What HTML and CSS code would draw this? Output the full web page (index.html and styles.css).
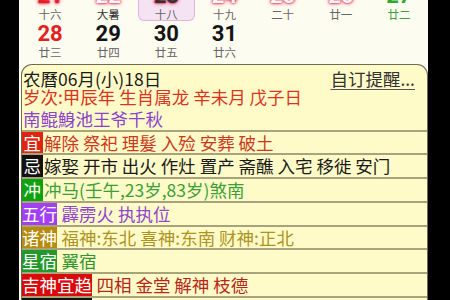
FILE: index.html
```html
<!DOCTYPE html>
<html lang="zh">
<head>
<meta charset="utf-8">
<link rel="stylesheet" href="styles.css">
</head>
<body>
<div class="app">
  <div class="cal">
    <div class="week">
      <div class="day"><div class="num red glow">21</div><div class="lunar">十六</div></div>
      <div class="day"><div class="num white glow">22</div><div class="lunar term">大暑</div></div>
      <div class="day today"><div class="num dark glow">23</div><div class="lunar">十八</div></div>
      <div class="day"><div class="num white glow">24</div><div class="lunar">十九</div></div>
      <div class="day"><div class="num white glow">25</div><div class="lunar">二十</div></div>
      <div class="day"><div class="num white glow">26</div><div class="lunar">廿一</div></div>
      <div class="day"><div class="num green">27</div><div class="lunar green">廿二</div></div>
    </div>
    <div class="week">
      <div class="day"><div class="num red">28</div><div class="lunar">廿三</div></div>
      <div class="day"><div class="num">29</div><div class="lunar">廿四</div></div>
      <div class="day"><div class="num">30</div><div class="lunar">廿五</div></div>
      <div class="day"><div class="num">31</div><div class="lunar">廿六</div></div>
      <div class="day"></div>
      <div class="day"></div>
      <div class="day"></div>
    </div>
  </div>
  <div class="box">
    <div class="head">
      <div class="line1"><span>农曆06月(小)18日</span><span class="remind">自订提醒...</span></div>
      <div class="line2">岁次:甲辰年 生肖属龙 辛未月 戊子日</div>
      <div class="line3">南鲲鯓池王爷千秋</div>
    </div>
    <div class="row yi"><span class="tag one">宜</span><span class="txt">解除 祭祀 理髮 入殓 安葬 破土</span></div>
    <div class="row ji"><span class="tag one">忌</span><span class="txt">嫁娶 开市 出火 作灶 置产 斋醮 入宅 移徙 安门</span></div>
    <div class="row chong"><span class="tag one">冲</span><span class="txt">冲马(壬午,23岁,83岁)煞南</span></div>
    <div class="row wuxing"><span class="tag">五行</span><span class="txt">霹雳火 执执位</span></div>
    <div class="row zhushen"><span class="tag">诸神</span><span class="txt">福神:东北 喜神:东南 财神:正北</span></div>
    <div class="row xingxiu"><span class="tag">星宿</span><span class="txt">翼宿</span></div>
    <div class="row jishen"><span class="tag">吉神宜趋</span><span class="txt">四相 金堂 解神 枝德</span></div>
    <div class="row xiongshen"><span class="tag">凶神宜忌</span><span class="txt">月煞 月虚 血支 天贼</span></div>
  </div>
</div>
</body>
</html>
```

FILE: styles.css
```css
html, body {
  margin: 0;
  height: 100%;
  overflow: hidden;
  background: #000;
}

.app {
  margin-left: 19px;
  width: 409px;
  height: 300px;
  overflow: hidden;
  background: #fdfcf1;
  font-family: "Noto Sans CJK SC", sans-serif;
}

.cal {
  margin-top: -17px;
  padding-left: 2px;
}

.week {
  display: grid;
  grid-template-columns: repeat(7, 1fr);
  height: 38px;
}

.day {
  padding-top: 1px;
  text-align: center;
  box-sizing: border-box;
}

.day.today {
  margin: 0 0.5px 0.5px;
  background: #f5e3f3;
  border: 1px solid #e3b2df;
  border-top: none;
  border-radius: 0 0 6px 6px;
  padding-top: 1px;
}

.num {
  font: bold 22px/24px Roboto, sans-serif;
  color: #151515;
}

.num.red { color: #e22222; }
.num.green { color: #2ea82e; }
.num.white { color: #fff6f8; }
.num.dark { color: #333; }
.num.glow {
  text-shadow: 0 0 2px #e0204a, 0 0 3px #e0204a, 0 0 5px #f07090;
}

.lunar {
  font-size: 11.5px;
  line-height: 12px;
  color: #666;
}

.lunar.term { color: #333; }
.lunar.green { color: #3aa03a; }

.box {
  margin: 5px 0 0 2px;
  border: 1.5px solid #6d6b52;
  border-bottom: none;
  border-radius: 11px 11px 0 0;
  background: #fffbc8;
  font-size: 17.5px;
}

.head {
  padding-left: 1px;
}

.line1 {
  display: flex;
  justify-content: space-between;
  padding-top: 4px;
  line-height: 20px;
  color: #1a1a1a;
}

.remind {
  margin-right: 12px;
  color: #333;
  text-decoration: underline;
  text-decoration-color: #555;
  text-underline-offset: 3px;
}

.line2 {
  line-height: 16px;
  color: #d7351f;
}

.line3 {
  padding-top: 3px;
  line-height: 21.5px;
  color: #8a42cf;
}

.row {
  display: flex;
  border-top: 2px solid #a9a37c;
  height: 21.8px;
  line-height: 21.8px;
  white-space: nowrap;
}

.tag {
  color: #fff;
}

.tag.one {
  padding: 0 1.5px;
}

.txt {
  margin-left: 4.5px;
}

.tag.one + .txt {
  margin-left: 1.5px;
}

.yi .tag { background: #de2512; }
.yi .txt { color: #c93a1c; }

.ji .tag { background: #111; }
.ji .txt { color: #1a1a1a; }

.chong .tag { background: #0ea30e; }
.chong .txt { color: #3b9f37; }

.wuxing .tag { background: #a23ff2; }
.wuxing .txt { color: #8e45cf; }

.zhushen .tag { background: #b78c0e; }
.zhushen .txt { color: #ad9322; }

.xingxiu .tag { background: #22992a; }
.xingxiu .txt { color: #2f962f; }

.jishen .tag { background: #d80a0a; }
.jishen .txt { color: #b3281a; }

.xiongshen .tag { background: #111; }
.xiongshen .txt { color: #1a1a1a; }
```
